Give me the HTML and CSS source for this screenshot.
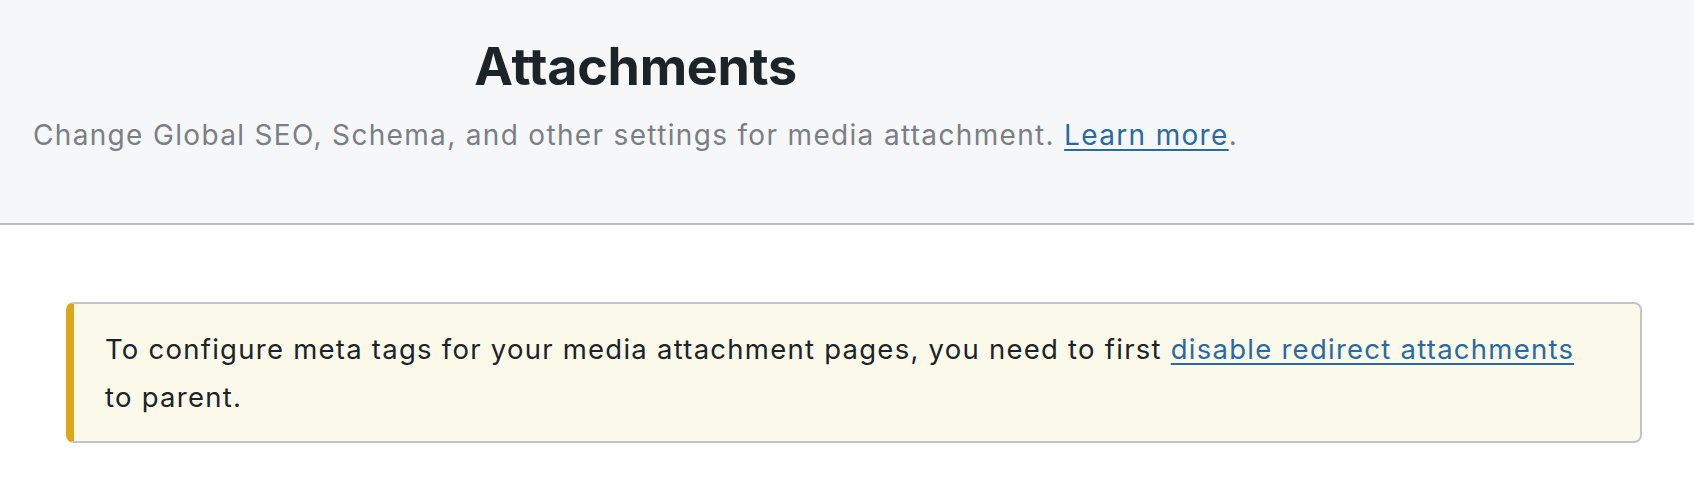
FILE: index.html
```html
<!DOCTYPE html>
<html lang="en">
<head>
<meta charset="utf-8">
<title>Attachments</title>
<link rel="stylesheet" href="styles.css">
</head>
<body>
<header class="page-header">
  <div class="header-inner">
    <h1 class="title">Attachments</h1>
    <p class="subtitle">Change Global SEO, Schema, and other settings for media attachment. <a href="#" class="link">Learn more</a>.</p>
  </div>
</header>
<main class="content">
  <div class="notice">
    <p class="notice-text">To configure meta tags for your media attachment pages, you need to first <a href="#" class="link">disable redirect attachments</a> to parent.</p>
  </div>
</main>
</body>
</html>
```
FILE: styles.css
```css
html, body {
  margin: 0;
  padding: 0;
  background: #ffffff;
}
body {
  font-family: Inter, "Noto Sans", "Liberation Sans", sans-serif;
  color: #1d2327;
  width: 1694px;
  height: 486px;
  overflow: hidden;
}
.page-header {
  background: #f6f7f9;
  border-bottom: 2px solid #bdbdbf;
  height: 223px;
  box-sizing: content-box;
}
.header-inner {
  display: flex;
  flex-direction: column;
  align-items: center;
  width: fit-content;
  padding: 35px 0 0 33px;
}
.title {
  margin: 0;
  font-size: 52px;
  line-height: 64px;
  font-weight: 700;
  color: #1d2327;
  letter-spacing: -0.3px;
}
.subtitle {
  margin: 16px 0 0 0;
  font-size: 28px;
  line-height: 40px;
  color: #7b7f85;
  letter-spacing: 1.33px;
}
.link {
  color: #2a6aa3;
  text-decoration: underline;
  text-decoration-thickness: 2px;
  text-underline-offset: 4px;
}
.content {
  padding: 77px 52px 0 66px;
}
.notice {
  background: #fbf9ea;
  border: 2px solid #c3c4c7;
  border-left: 8px solid #dba617;
  border-radius: 8px;
  padding: 21px 50px 20px 31px;
}
.notice-text {
  margin: 0;
  font-size: 27.5px;
  line-height: 48px;
  color: #1d2327;
  letter-spacing: 1.25px;
}
```
